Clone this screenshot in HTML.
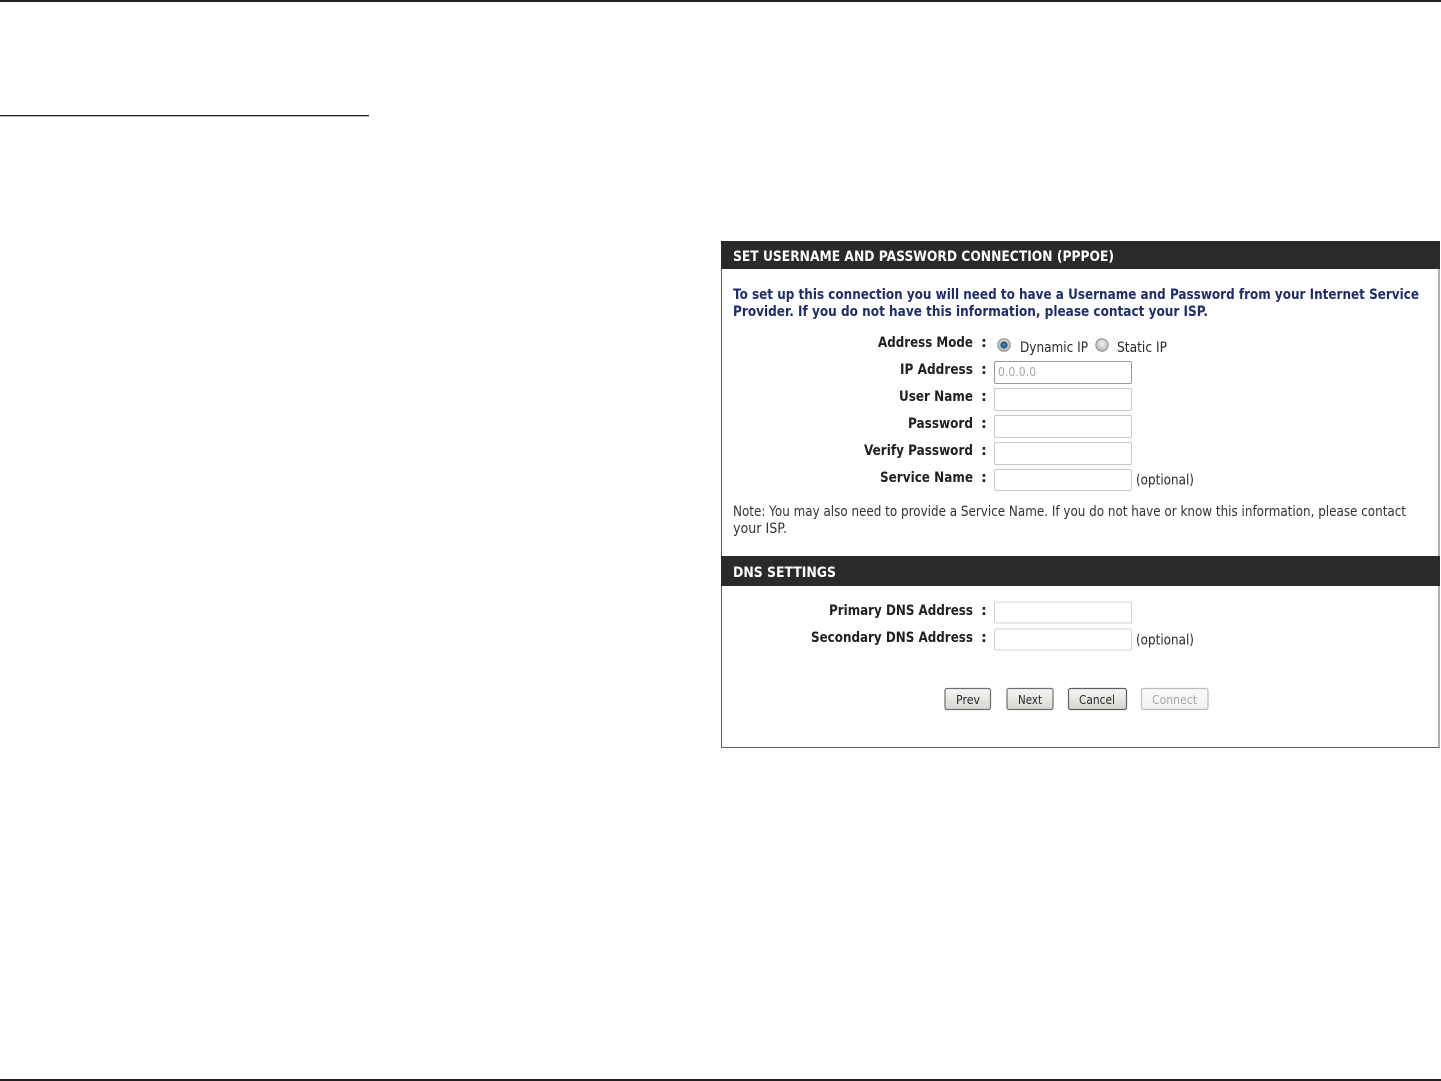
<!DOCTYPE html>
<html>
<head>
<meta charset="utf-8">
<title>Set Username and Password Connection (PPPoE)</title>
<style>
html,body{margin:0;padding:0;background:#fff;}
body{width:1441px;height:1081px;overflow:hidden;}
svg{display:block;}
text{font-family:"DejaVu Sans","Liberation Sans",sans-serif;font-size:14px;fill:#2a2a2a;}
.b{font-weight:bold;font-size:14.5px;fill:#231f20;}
.h{font-weight:bold;font-size:14.5px;fill:#fff;}
.p{font-weight:bold;font-size:14.5px;fill:#1e2d6b;}
.n{font-size:14px;fill:#333;}
.s{font-size:12.5px;fill:#2a2a2a;}
.d{font-size:12.5px;fill:#a8a8a8;}
.panel{filter:blur(0.3px);}
</style>
</head>
<body>
<svg width="1441" height="1081" viewBox="0 0 1441 1081" xmlns="http://www.w3.org/2000/svg">
<defs>
<linearGradient id="btn" x1="0" y1="0" x2="0" y2="1">
<stop offset="0" stop-color="#f6f6f4"/><stop offset="1" stop-color="#d6d5d2"/>
</linearGradient>
<linearGradient id="btnd" x1="0" y1="0" x2="0" y2="1">
<stop offset="0" stop-color="#fbfbfb"/><stop offset="1" stop-color="#f0f0ee"/>
</linearGradient>
<radialGradient id="rad" cx="0.5" cy="0.4" r="0.6">
<stop offset="0" stop-color="#f2f2f2"/><stop offset="1" stop-color="#b4b4b4"/>
</radialGradient>
<radialGradient id="dot" cx="0.5" cy="0.5" r="0.5">
<stop offset="0" stop-color="#4c93cf"/><stop offset="1" stop-color="#17456f"/>
</radialGradient>
</defs>

<!-- page rules -->
<rect x="0" y="0" width="1441" height="2" fill="#231f20"/>
<rect x="0" y="115" width="369" height="1.3" fill="#231f20"/>
<rect x="0" y="1079" width="1441" height="2" fill="#231f20"/>

<g class="panel">
<!-- panel -->
<rect x="721.5" y="241.5" width="717.5" height="506" fill="#fff" stroke="#5f5f5f" stroke-width="1"/>
<rect x="721" y="241" width="719" height="28" fill="#2b2a29"/>
<rect x="721" y="556" width="719" height="30" fill="#2b2a29"/>

<text class="h" x="733" y="261" textLength="381" lengthAdjust="spacingAndGlyphs">SET USERNAME AND PASSWORD CONNECTION (PPPOE)</text>
<text class="h" x="733" y="577" textLength="103" lengthAdjust="spacingAndGlyphs">DNS SETTINGS</text>

<text class="p" x="733" y="299" textLength="686" lengthAdjust="spacingAndGlyphs">To set up this connection you will need to have a Username and Password from your Internet Service</text>
<text class="p" x="733" y="316" textLength="475" lengthAdjust="spacingAndGlyphs">Provider. If you do not have this information, please contact your ISP.</text>

<!-- labels -->
<text class="b" x="878" y="347" textLength="95" lengthAdjust="spacingAndGlyphs">Address Mode</text>
<text class="b" x="900" y="374" textLength="73" lengthAdjust="spacingAndGlyphs">IP Address</text>
<text class="b" x="899" y="401" textLength="74" lengthAdjust="spacingAndGlyphs">User Name</text>
<text class="b" x="908" y="428" textLength="65" lengthAdjust="spacingAndGlyphs">Password</text>
<text class="b" x="864" y="455" textLength="109" lengthAdjust="spacingAndGlyphs">Verify Password</text>
<text class="b" x="880" y="482" textLength="93" lengthAdjust="spacingAndGlyphs">Service Name</text>
<text class="b" x="829" y="615" textLength="144" lengthAdjust="spacingAndGlyphs">Primary DNS Address</text>
<text class="b" x="811" y="642" textLength="162" lengthAdjust="spacingAndGlyphs">Secondary DNS Address</text>

<!-- colons -->
<text class="b" x="981" y="347">:</text>
<text class="b" x="981" y="374">:</text>
<text class="b" x="981" y="401">:</text>
<text class="b" x="981" y="428">:</text>
<text class="b" x="981" y="455">:</text>
<text class="b" x="981" y="482">:</text>
<text class="b" x="981" y="615">:</text>
<text class="b" x="981" y="642">:</text>

<!-- radios -->
<circle cx="1004" cy="345" r="6.2" fill="url(#rad)" stroke="#8a8a8a" stroke-width="1"/>
<circle cx="1004" cy="345" r="3.6" fill="url(#dot)"/>
<circle cx="1102" cy="345" r="6.2" fill="url(#rad)" stroke="#8f8f8f" stroke-width="1"/>
<text x="1020" y="352" textLength="68" lengthAdjust="spacingAndGlyphs">Dynamic IP</text>
<text x="1117" y="352" textLength="50" lengthAdjust="spacingAndGlyphs">Static IP</text>

<!-- inputs -->
<rect x="994.5" y="361.5" width="137" height="22" rx="1.5" fill="#fff" stroke="#9a9a9a"/>
<text class="d" x="998" y="376" textLength="38" lengthAdjust="spacingAndGlyphs">0.0.0.0</text>
<rect x="994.5" y="388.5" width="137" height="22" rx="1.5" fill="#fff" stroke="#c6c9cf"/>
<rect x="994.5" y="415.5" width="137" height="22" rx="1.5" fill="#fff" stroke="#c6c9cf"/>
<rect x="994.5" y="442.5" width="137" height="22" rx="1.5" fill="#fff" stroke="#c6c9cf"/>
<rect x="994.5" y="469.5" width="137" height="21" rx="1.5" fill="#fff" stroke="#c6c9cf"/>
<rect x="994.5" y="602" width="137" height="21" rx="1.5" fill="#fff" stroke="#cfd2d8"/>
<rect x="994.5" y="629" width="137" height="21" rx="1.5" fill="#fff" stroke="#cfd2d8"/>

<text x="1136" y="484.5" textLength="58" lengthAdjust="spacingAndGlyphs">(optional)</text>
<text x="1136" y="644.5" textLength="58" lengthAdjust="spacingAndGlyphs">(optional)</text>

<!-- note -->
<text class="n" x="733" y="516" textLength="673" lengthAdjust="spacingAndGlyphs">Note: You may also need to provide a Service Name. If you do not have or know this information, please contact</text>
<text class="n" x="733" y="533" textLength="54" lengthAdjust="spacingAndGlyphs">your ISP.</text>

<!-- buttons -->
<rect x="945" y="688.5" width="45.5" height="21" rx="2" fill="url(#btn)" stroke="#6f6f6f" stroke-width="1.2"/>
<text class="s" x="956" y="704" textLength="24" lengthAdjust="spacingAndGlyphs">Prev</text>
<rect x="1007" y="688.5" width="46" height="21" rx="2" fill="url(#btn)" stroke="#6f6f6f" stroke-width="1.2"/>
<text class="s" x="1018" y="704" textLength="24" lengthAdjust="spacingAndGlyphs">Next</text>
<rect x="1068.5" y="688.5" width="58" height="21" rx="2" fill="url(#btn)" stroke="#5f5f5f" stroke-width="1.2"/>
<text class="s" x="1079" y="704" textLength="36" lengthAdjust="spacingAndGlyphs">Cancel</text>
<rect x="1141.5" y="688.5" width="66.5" height="21" rx="2" fill="url(#btnd)" stroke="#bdbdbd" stroke-width="1.2"/>
<text class="d" x="1152" y="704" textLength="45" lengthAdjust="spacingAndGlyphs">Connect</text>
</g>
</svg>
</body>
</html>
